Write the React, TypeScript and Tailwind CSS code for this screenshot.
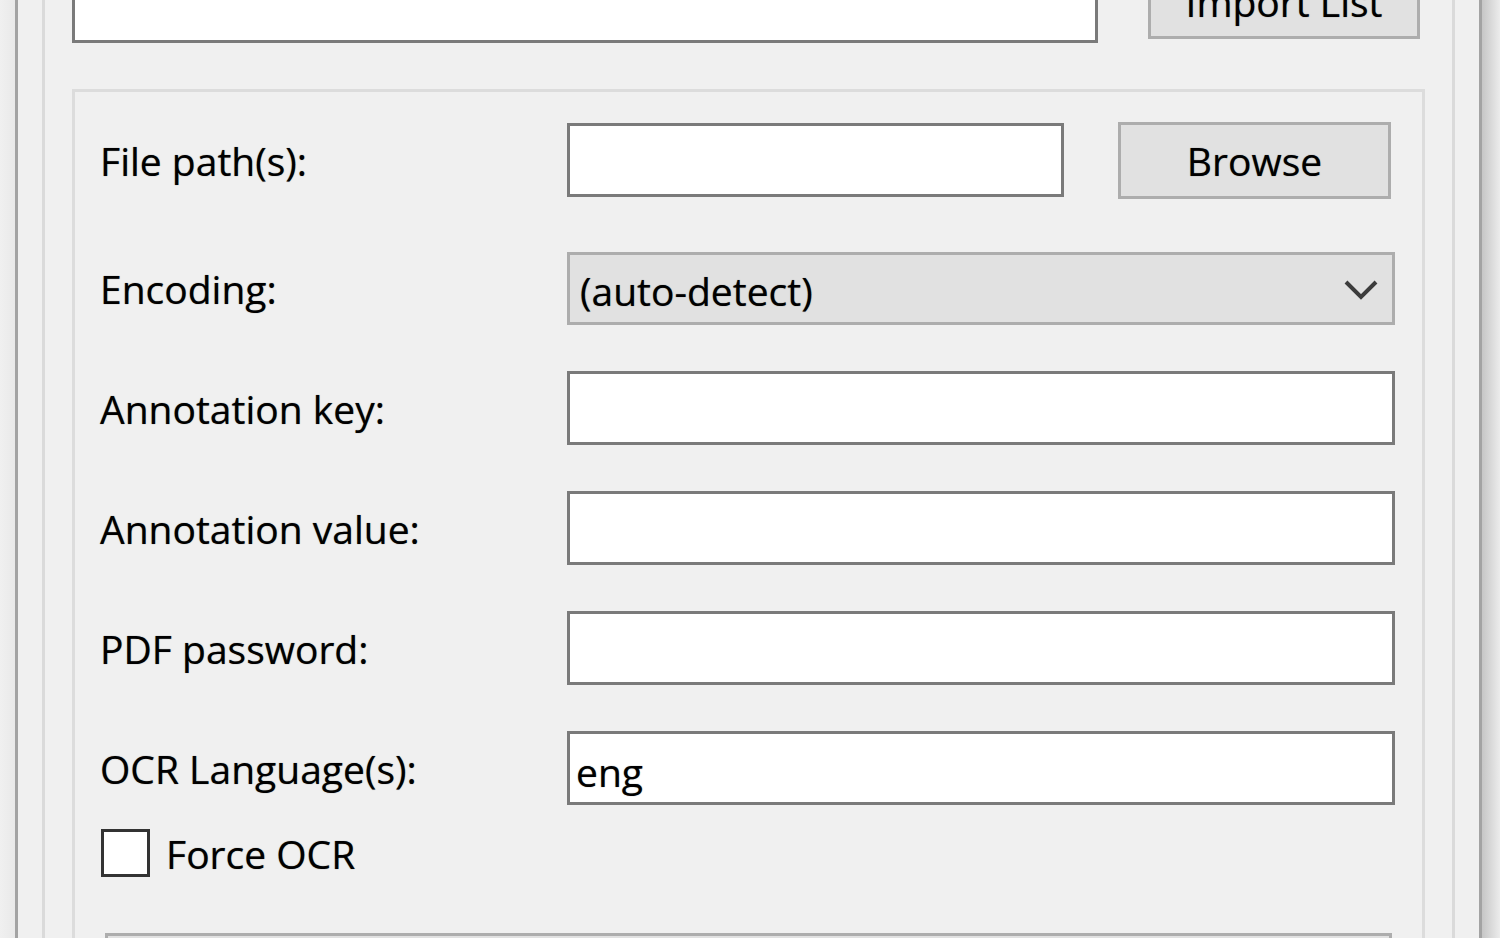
const font = { fontFamily: '"Open Sans", "Noto Sans", sans-serif' }

function Label({ children }: { children: React.ReactNode }) {
  return <div className="w-[467px] shrink-0 text-[39px] leading-none text-black">{children}</div>
}

function TextBox({ value, className = '' }: { value?: string; className?: string }) {
  return (
    <div className={`h-[74px] border-[3px] border-[#7a7a7a] bg-white flex items-center pl-[6px] pt-[6px] text-[39px] leading-none text-black ${className}`}>
      {value}
    </div>
  )
}

export default function App() {
  return (
    <div
      className="w-[1500px] h-[938px] overflow-hidden bg-[#f0f0f0] flex [text-shadow:0_0_1px_rgba(0,0,0,0.55)]"
      style={font}
    >
      <div className="w-[15px] shrink-0 bg-gradient-to-r from-[#f0f0f0] to-[#e9e9e9]" />

      <div className="w-[1467px] shrink-0 border-x-[3px] border-[#a3a3a3] px-[24px] flex">
        <div className="flex-1 border-x-[3px] border-[#dadada] px-[27px]">
          {/* list + import */}
          <div className="flex items-end -mt-[40px]">
            <div className="w-[1026px] h-[83px] border-[3px] border-[#7a7a7a] bg-white" />
            <div className="ml-[50px] mb-[4px] w-[272px] h-[76px] border-[3px] border-[#adadad] bg-[#e1e1e1] flex items-center justify-center text-[39px] leading-none text-black">
              Import List
            </div>
          </div>

          {/* options group */}
          <div className="mt-[46px] h-[900px] border-[3px] border-[#dcdcdc] pt-[31px] pl-[25px] pr-[27px]">
            <div className="h-[74px] flex items-center">
              <Label>File path(s):</Label>
              <TextBox className="w-[497px]" />
              <div className="ml-[54px] w-[273px] h-[77px] border-[3px] border-[#adadad] bg-[#e1e1e1] flex items-center justify-center text-[39px] leading-none text-black">
                Browse
              </div>
            </div>

            <div className="mt-[54px] h-[74px] flex items-center">
              <Label>Encoding:</Label>
              <div className="flex-1 h-[73px] border-[3px] border-[#adadad] bg-[#e1e1e1] flex items-center pl-[10px] pr-[14px] pt-[4px] text-[39px] leading-none text-black">
                <span className="flex-1">(auto-detect)</span>
                <svg width="34" height="22" viewBox="0 0 34 22">
                  <polyline points="2,3 17,18 32,3" fill="none" stroke="#3c3c3c" strokeWidth="4" />
                </svg>
              </div>
            </div>

            <div className="mt-[46px] h-[74px] flex items-center">
              <Label>Annotation key:</Label>
              <TextBox className="flex-1" />
            </div>

            <div className="mt-[46px] h-[74px] flex items-center">
              <Label>Annotation value:</Label>
              <TextBox className="flex-1" />
            </div>

            <div className="mt-[46px] h-[74px] flex items-center">
              <Label>PDF password:</Label>
              <TextBox className="flex-1" />
            </div>

            <div className="mt-[46px] h-[74px] flex items-center">
              <Label>OCR Language(s):</Label>
              <TextBox className="flex-1" value="eng" />
            </div>

            <div className="mt-[24px] flex items-center pl-[1px]">
              <div className="w-[49px] h-[48px] border-[3px] border-[#333333] bg-white" />
              <span className="ml-[16px] text-[39px] leading-none text-black">Force OCR</span>
            </div>

            <div className="mt-[56px] ml-[5px] w-[1287px] h-[70px] border-[3px] border-[#adadad] bg-[#e1e1e1]" />
          </div>
        </div>
      </div>

      <div className="flex-1 bg-gradient-to-r from-[#c6c6c6] to-[#ececec]" />
    </div>
  )
}
